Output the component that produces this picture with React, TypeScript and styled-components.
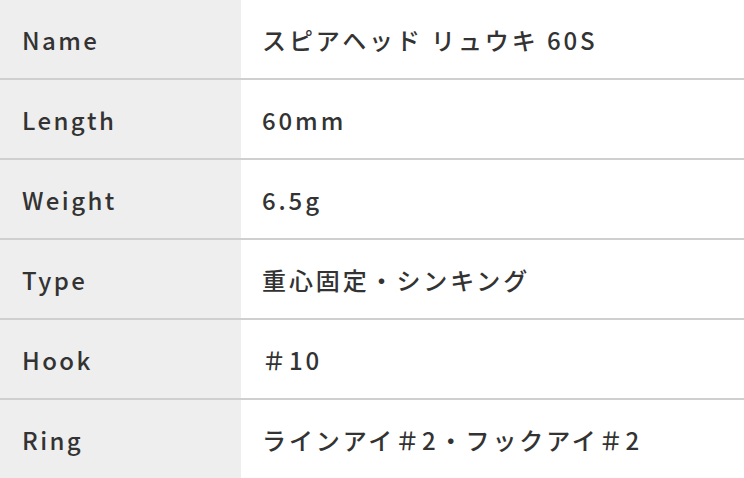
import styled, { createGlobalStyle } from "styled-components";

const specs = [
  { label: "Name", value: "スピアヘッド リュウキ 60S" },
  { label: "Length", value: "60mm" },
  { label: "Weight", value: "6.5g" },
  { label: "Type", value: "重心固定・シンキング" },
  { label: "Hook", value: "＃10" },
  { label: "Ring", value: "ラインアイ＃2・フックアイ＃2" },
];

const App = () => {
  return (
    <>
      <GlobalStyle />
      <SpecTable>
        <tbody>
          {specs.map((spec) => (
            <Row key={spec.label}>
              <Label>{spec.label}</Label>
              <Value>{spec.value}</Value>
            </Row>
          ))}
        </tbody>
      </SpecTable>
    </>
  );
};

export default App;

const GlobalStyle = createGlobalStyle`
  body {
    margin: 0;
    background: #fff;
    font-family: "Noto Sans CJK JP", "Noto Sans", sans-serif;
  }
`;

const SpecTable = styled.table`
  width: 744px;
  border-collapse: separate;
  border-spacing: 0;
  table-layout: fixed;
`;

const Row = styled.tr`
  td {
    border-bottom: 2px solid #cfcfcf;
  }

  &:last-child td {
    border-bottom: none;
  }
`;

const Cell = styled.td`
  height: 78px;
  padding: 0 0 0 22px;
  font-size: 24px;
  font-weight: 500;
  letter-spacing: 0.1em;
  color: #333333;
  vertical-align: middle;
  white-space: nowrap;
`;

const Label = styled(Cell)`
  width: 241px;
  box-sizing: border-box;
  background: #eeeeee;
`;

const Value = styled(Cell)`
  padding-left: 21px;
  letter-spacing: 0.12em;
`;
